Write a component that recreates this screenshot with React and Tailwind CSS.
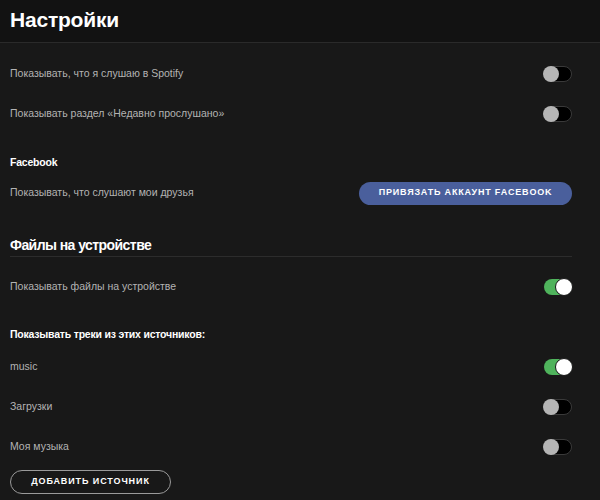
import { useState } from "react";

function Toggle({ on }) {
  if (on) {
    return (
      <div className="relative w-[28px] h-[16px] rounded-full bg-[#4fb35c]">
        <div className="absolute right-[-1px] top-[-1px] w-[18px] h-[18px] rounded-full bg-white border border-[#181818]" />
      </div>
    );
  }
  return (
    <div className="relative w-[28px] h-[16px] rounded-full bg-black border border-[#3a3a3a]">
      <div className="absolute left-[-2px] top-[-1px] w-[16px] h-[16px] rounded-full bg-[#b5b5b5]" />
    </div>
  );
}

function Row({ label, on, children }) {
  return (
    <div className="h-[40px] flex items-center justify-between">
      <span className="text-[10.5px] text-[#b3b3b3]">{label}</span>
      {children || <Toggle on={on} />}
    </div>
  );
}

export default function App() {
  const [rows] = useState([
    { label: "music", on: true },
    { label: "Загрузки", on: false },
    { label: "Моя музыка", on: false },
  ]);

  return (
    <div className="w-[600px] h-[500px] bg-[#181818] overflow-hidden" style={{ fontFamily: "'Liberation Sans', Arial, sans-serif" }}>
      <header className="h-[43px] bg-[#121212] border-b border-[#2a2a2a] px-[10px] flex items-center">
        <h1 className="text-[21px] font-bold text-white leading-none pb-[4px] tracking-[-0.01em]">Настройки</h1>
      </header>

      <div className="pl-[10px] pr-[28px]">
        <div className="mt-[11px]">
          <Row label="Показывать, что я слушаю в Spotify" on={false} />
          <Row label="Показывать раздел «Недавно прослушано»" on={false} />
        </div>

        <p className="mt-[19px] h-[20px] flex items-center text-[10.5px] font-bold text-white tracking-[-0.02em]">Facebook</p>
        <Row label="Показывать, что слушают мои друзья">
          <button className="w-[213px] h-[23px] rounded-full bg-[#4a5f9c] text-white text-[9px] font-bold tracking-[0.09em] uppercase">
            Привязать аккаунт Facebook
          </button>
        </Row>

        <div className="mt-[22px] pb-[1px] border-b border-[#2c2c2c]">
          <h2 className="text-[14px] font-bold text-white leading-[20px] tracking-[-0.04em]">Файлы на устройстве</h2>
        </div>

        <div className="mt-[10px]">
          <Row label="Показывать файлы на устройстве" on={true} />
        </div>

        <p className="mt-[18px] h-[20px] flex items-center text-[10.5px] font-bold text-white tracking-[-0.02em]">
          Показывать треки из этих источников:
        </p>
        <div className="mt-[2px]">
          {rows.map((r) => (
            <Row key={r.label} label={r.label} on={r.on} />
          ))}
        </div>

        <button className="mt-[1px] w-[161px] h-[24px] rounded-full border border-[#9a9a9a] text-white text-[9px] font-bold tracking-[0.1em] uppercase">
          Добавить источник
        </button>
      </div>
    </div>
  );
}
